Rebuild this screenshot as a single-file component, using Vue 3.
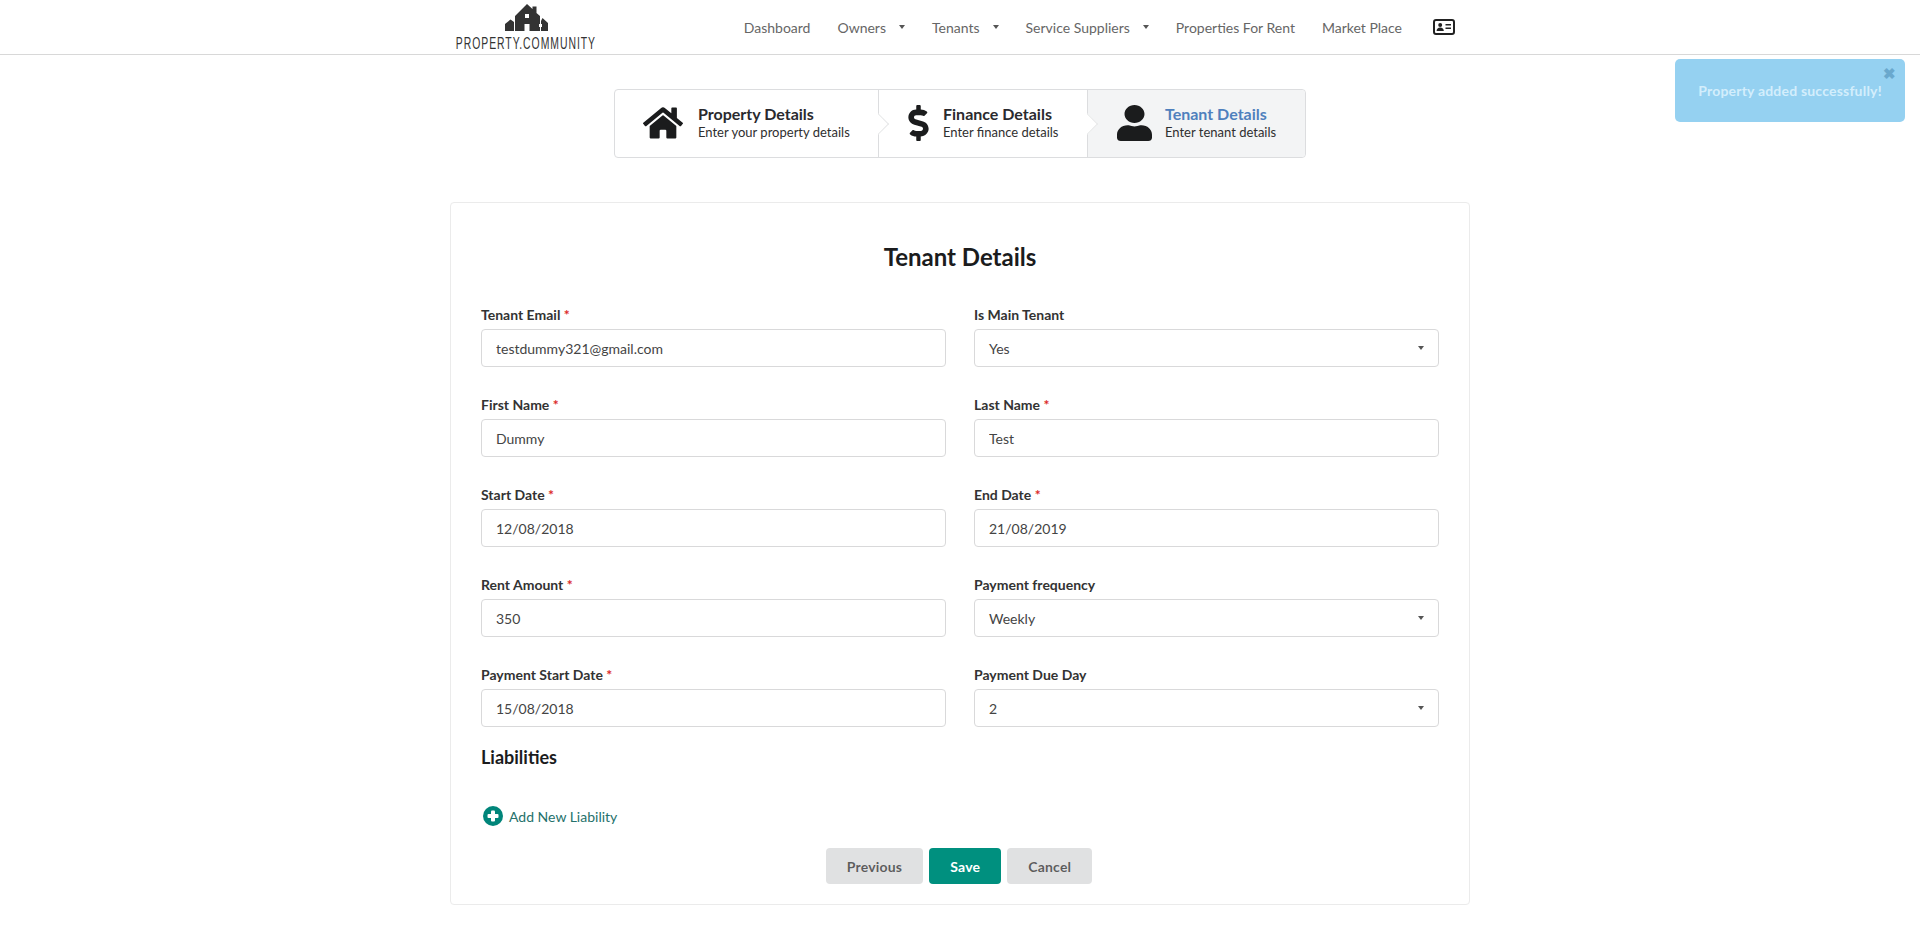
<template>
  <div class="page">
    <header class="topbar">
      <div class="topbar-inner">
        <a class="logo">
          <svg class="logo-mark" viewBox="0 0 43 27" width="43" height="27">
            <path fill="#333" d="M22 0l5.500 5V2.500h4v6.500L35 12v15H10V12z" />
            <path fill="#333" d="M0 27V20l5.500-4.500L9 18v9zM36 27V17l1.500-3L43 19v8z" />
            <rect x="20" y="10" width="4" height="4" fill="#fff" />
            <rect x="19.500" y="20" width="5" height="7" fill="#fff" />
            <rect x="34" y="20" width="3" height="3" fill="#fff" />
          </svg>
          <span class="logo-text">PROPERTY.COMMUNITY</span>
        </a>
        <nav class="menu">
          <a v-for="item in menu" :key="item.label" class="menu-item">
            {{ item.label }}
            <i v-if="item.caret" class="caret"></i>
          </a>
          <a class="menu-item card-icon">
            <svg width="22" height="16" viewBox="0 0 22 16">
              <rect x="1" y="1" width="20" height="14" rx="2" fill="none" stroke="#222" stroke-width="2" />
              <circle cx="7.200" cy="6" r="2" fill="#222" />
              <path fill="#222" d="M3.600 12c0-2.200 1.500-3.400 3.600-3.400s3.600 1.200 3.600 3.400z" />
              <rect x="12.500" y="5" width="5.500" height="1.500" fill="#222" />
              <rect x="12.500" y="8.500" width="5.500" height="1.500" fill="#222" />
            </svg>
          </a>
        </nav>
      </div>
    </header>

    <div class="toast">
      <span class="toast-close">&#10006;</span>
      Property added successfully!
    </div>

    <div class="steps">
      <div class="step step-one">
        <svg width="40" height="36" viewBox="0 0 576 512">
          <path d="M280.37 148.26L96 300.11V464a16 16 0 0 0 16 16l112.06-.29a16 16 0 0 0 15.92-16V368a16 16 0 0 1 16-16h64a16 16 0 0 1 16 16v95.64a16 16 0 0 0 16 16.05L464 480a16 16 0 0 0 16-16V300L295.67 148.26a12.19 12.19 0 0 0-15.3 0zM571.6 251.47L488 182.56V44.05a12 12 0 0 0-12-12h-56a12 12 0 0 0-12 12v72.61L318.47 43a48 48 0 0 0-61 0L4.34 251.47a12 12 0 0 0-1.6 16.9l25.5 31A12 12 0 0 0 45.15 301l235.22-193.74a12.19 12.19 0 0 1 15.3 0L530.9 301a12 12 0 0 0 16.9-1.6l25.5-31a12 12 0 0 0-1.7-16.93z" />
        </svg>
        <div>
          <div class="step-title">Property Details</div>
          <div class="step-desc">Enter your property details</div>
        </div>
      </div>
      <div class="step step-two">
        <svg width="21" height="36" viewBox="0 0 288 512">
          <path d="M209.2 233.4l-108-31.6C88.7 198.2 80 186.5 80 173.5c0-16.3 13.2-29.5 29.5-29.5h66.3c12.2 0 24.2 3.7 34.2 10.5 6.1 4.1 14.3 3.1 19.5-2l34.8-34c7.1-6.9 6.1-18.4-1.8-24.5C238 74.8 207.4 64.1 176 64V16c0-8.8-7.2-16-16-16h-32c-8.8 0-16 7.2-16 16v48h-2.5C45.8 64-5.4 118.7.5 183.6c4.2 46.1 39.4 83.6 83.8 96.6l102.5 30c12.5 3.7 21.2 15.3 21.2 28.3 0 16.3-13.2 29.5-29.5 29.5h-66.3C100 368 88 364.3 78 357.5c-6.1-4.1-14.3-3.1-19.5 2l-34.8 34c-7.1 6.9-6.1 18.4 1.8 24.5 24.5 19.2 55.1 29.9 86.5 30v48c0 8.8 7.2 16 16 16h32c8.8 0 16-7.2 16-16v-48.2c46.6-.9 90.3-28.6 105.7-72.7 21.5-61.6-14.6-124.8-72.5-141.7z" />
        </svg>
        <div>
          <div class="step-title">Finance Details</div>
          <div class="step-desc">Enter finance details</div>
        </div>
      </div>
      <div class="step step-three">
        <svg width="35" height="36" viewBox="0 0 448 512" preserveAspectRatio="none">
          <path d="M224 256c70.7 0 128-57.3 128-128S294.7 0 224 0 96 57.3 96 128s57.3 128 128 128zm89.6 32h-16.7c-22.2 10.2-46.9 16-72.9 16s-50.6-5.8-72.9-16h-16.7C60.2 288 0 348.2 0 422.4V464c0 26.5 21.5 48 48 48h352c26.5 0 48-21.5 48-48v-41.6c0-74.2-60.2-134.4-134.4-134.4z" />
        </svg>
        <div>
          <div class="step-title active">Tenant Details</div>
          <div class="step-desc">Enter tenant details</div>
        </div>
      </div>
    </div>

    <main class="card">
      <h2 class="card-title">Tenant Details</h2>
      <div class="form-grid">
        <div v-for="field in fields" :key="field.label" class="field">
          <label>{{ field.label }}<span v-if="field.required" class="req"> *</span></label>
          <div v-if="field.select" class="select">
            <span>{{ field.value }}</span>
            <i class="caret"></i>
          </div>
          <input v-else type="text" :value="field.value" readonly />
        </div>
      </div>

      <h3 class="section-title">Liabilities</h3>

      <a class="add-link">
        <svg width="20" height="20" viewBox="0 0 20 20">
          <circle cx="10" cy="10" r="10" fill="#00857a" />
          <rect x="4.500" y="8" width="11" height="4" rx="1" fill="#fff" />
          <rect x="8" y="4.500" width="4" height="11" rx="1" fill="#fff" />
        </svg>
        Add New Liability
      </a>

      <div class="actions">
        <button class="btn">Previous</button>
        <button class="btn primary">Save</button>
        <button class="btn">Cancel</button>
      </div>
    </main>
  </div>
</template>

<script setup>
const menu = [
  { label: "Dashboard" },
  { label: "Owners", caret: true },
  { label: "Tenants", caret: true },
  { label: "Service Suppliers", caret: true },
  { label: "Properties For Rent" },
  { label: "Market Place" },
];

const fields = [
  { label: "Tenant Email", required: true, value: "testdummy321@gmail.com" },
  { label: "Is Main Tenant", value: "Yes", select: true },
  { label: "First Name", required: true, value: "Dummy" },
  { label: "Last Name", required: true, value: "Test" },
  { label: "Start Date", required: true, value: "12/08/2018" },
  { label: "End Date", required: true, value: "21/08/2019" },
  { label: "Rent Amount", required: true, value: "350" },
  { label: "Payment frequency", value: "Weekly", select: true },
  { label: "Payment Start Date", required: true, value: "15/08/2018" },
  { label: "Payment Due Day", value: "2", select: true },
];
</script>

<style>
html,
body {
  background: #fff;
}
</style>

<style scoped>
.page {
  font-family: Lato, "Open Sans", sans-serif;
  font-size: 14px;
  color: rgba(0, 0, 0, 0.87);
  min-height: 930px;
  box-sizing: border-box;
}

.topbar {
  height: 54px;
  border-bottom: 1px solid #d8d8d8;
}

.topbar-inner {
  width: 1020px;
  margin: 0 auto;
  height: 100%;
  display: flex;
  align-items: center;
  justify-content: space-between;
}

.logo {
  display: flex;
  flex-direction: column;
  align-items: center;
  align-self: flex-start;
  width: 140px;
  margin-left: 6px;
}

.logo-mark {
  display: block;
  margin: 4px 0 5px;
}

.logo-text {
  font-family: "Liberation Sans", sans-serif;
  font-size: 16px;
  line-height: 15px;
  letter-spacing: 1.5px;
  color: #333;
  white-space: nowrap;
  transform: scaleX(0.65);
}

.menu {
  display: flex;
  align-items: center;
  gap: 27px;
  margin-right: 15px;
}

.menu-item {
  display: flex;
  align-items: center;
  color: #666;
  white-space: nowrap;
}

.card-icon {
  margin-left: 4px;
}

.caret {
  display: inline-block;
  width: 0;
  height: 0;
  border-left: 3.5px solid transparent;
  border-right: 3.5px solid transparent;
  border-top: 4px solid #555;
}

.menu-item .caret {
  margin-left: 13px;
}

.toast {
  position: absolute;
  top: 59px;
  left: 1675px;
  width: 230px;
  height: 63px;
  box-sizing: border-box;
  padding-top: 23px;
  text-align: center;
  background: #95d1f1;
  border-radius: 5px;
  color: #d3eefc;
  font-weight: 700;
  letter-spacing: 0.2px;
}

.toast-close {
  position: absolute;
  top: 6px;
  right: 9px;
  font-size: 15px;
  line-height: 16px;
  color: #6aa8cd;
}

.steps {
  display: flex;
  width: 692px;
  height: 69px;
  margin: 34px auto 0;
  box-sizing: border-box;
  border: 1px solid #dcdddf;
  border-radius: 4px;
}

.step {
  position: relative;
  display: flex;
  align-items: center;
  box-sizing: border-box;
  height: 100%;
  padding-bottom: 2px;
}

.step svg {
  fill: #1b1c1d;
  flex: none;
}

.step-one {
  width: 264px;
  padding-left: 28px;
  gap: 15px;
  border-right: 1px solid #dcdddf;
}

.step-two {
  width: 209px;
  padding-left: 29px;
  gap: 14px;
  border-right: 1px solid #dcdddf;
}

.step-three {
  flex: 1;
  padding-left: 29px;
  gap: 13px;
  background: #f3f4f5;
  border-radius: 0 4px 4px 0;
}

.step-one::after,
.step-two::after {
  content: "";
  position: absolute;
  z-index: 1;
  top: 50%;
  right: -8px;
  width: 14px;
  height: 14px;
  background: #fff;
  border-top: 1px solid #e6e7e8;
  border-right: 1px solid #e6e7e8;
  transform: translateY(-50%) rotate(45deg);
}

.step-title {
  font-size: 16px;
  font-weight: 700;
  line-height: 18px;
  color: #2a2a2e;
}

.step-title.active {
  color: #4f80bd;
}

.step-desc {
  font-size: 13px;
  line-height: 16px;
  margin-top: 1px;
  color: #2f2f2f;
}

.card {
  width: 1020px;
  height: 703px;
  margin: 44px auto 0;
  box-sizing: border-box;
  padding: 39px 30px 0;
  border: 1px solid #ebebeb;
  border-radius: 4px;
}

.card-title {
  margin: 0 0 34px;
  font-size: 24px;
  line-height: 30px;
  font-weight: 700;
  text-align: center;
  color: #1b1c1d;
}

.form-grid {
  display: grid;
  grid-template-columns: 465px 465px;
  column-gap: 28px;
  row-gap: 29px;
}

.field label {
  display: block;
  height: 17px;
  line-height: 17px;
  margin-bottom: 6px;
  font-size: 14px;
  font-weight: 700;
  color: #333;
}

.req {
  color: #db2828;
}

.field input,
.select {
  display: flex;
  align-items: center;
  justify-content: space-between;
  width: 100%;
  height: 38px;
  box-sizing: border-box;
  padding: 0 14px;
  border: 1px solid #d9d9da;
  border-radius: 4px;
  background: #fff;
  font-family: inherit;
  font-size: 14px;
  color: #444;
  outline: none;
}

.section-title {
  margin: 18px 0 0;
  font-size: 18px;
  line-height: 24px;
  font-weight: 700;
  color: #1b1c1d;
}

.add-link {
  display: inline-flex;
  align-items: center;
  gap: 6px;
  margin: 37px 0 0 2px;
  color: #25716b;
}

.actions {
  display: flex;
  justify-content: center;
  gap: 6px;
  margin: 19px 2px 0 0;
}

.btn {
  height: 36px;
  padding: 0 21px;
  border: 0;
  border-radius: 4px;
  background: #e0e1e2;
  color: rgba(0, 0, 0, 0.6);
  font-family: inherit;
  font-size: 14px;
  font-weight: 700;
  letter-spacing: 0.2px;
}

.btn.primary {
  background: #00907f;
  color: #fff;
}
</style>
